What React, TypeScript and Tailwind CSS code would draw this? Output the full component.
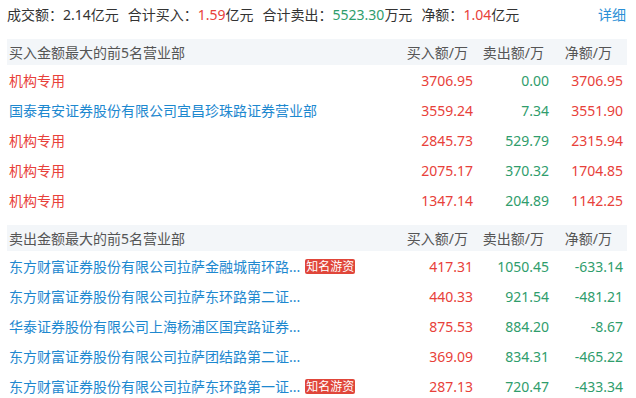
import React from "react";

const RED = "text-[#e8413a]";
const GREEN = "text-[#2f9d6c]";
const BLUE = "text-[#1d88cf]";

type Row = { name: string; inst?: boolean; badge?: boolean; buy: string; sell: string; net: string };

const buyRows: Row[] = [
  { name: "机构专用", inst: true, buy: "3706.95", sell: "0.00", net: "3706.95" },
  { name: "国泰君安证券股份有限公司宜昌珍珠路证券营业部", buy: "3559.24", sell: "7.34", net: "3551.90" },
  { name: "机构专用", inst: true, buy: "2845.73", sell: "529.79", net: "2315.94" },
  { name: "机构专用", inst: true, buy: "2075.17", sell: "370.32", net: "1704.85" },
  { name: "机构专用", inst: true, buy: "1347.14", sell: "204.89", net: "1142.25" },
];

const sellRows: Row[] = [
  { name: "东方财富证券股份有限公司拉萨金融城南环路...", badge: true, buy: "417.31", sell: "1050.45", net: "-633.14" },
  { name: "东方财富证券股份有限公司拉萨东环路第二证...", buy: "440.33", sell: "921.54", net: "-481.21" },
  { name: "华泰证券股份有限公司上海杨浦区国宾路证券...", buy: "875.53", sell: "884.20", net: "-8.67" },
  { name: "东方财富证券股份有限公司拉萨团结路第二证...", buy: "369.09", sell: "834.31", net: "-465.22" },
  { name: "东方财富证券股份有限公司拉萨东环路第一证...", badge: true, buy: "287.13", sell: "720.47", net: "-433.34" },
];

function Section({ title, rows }: { title: string; rows: Row[] }) {
  return (
    <div className="flex flex-col">
      <div className="flex h-[26px] items-center bg-[#f3f6f9] text-[#555] pr-[4px]">
        <div className="flex-1 pl-[2px]">{title}</div>
        <div className="w-[80px] text-right pr-[5px]">买入额/万</div>
        <div className="w-[76px] text-right pr-[5px]">卖出额/万</div>
        <div className="w-[74px] text-right pr-[11px]">净额/万</div>
      </div>
      {rows.map((r, i) => {
        const netNeg = r.net.startsWith("-");
        return (
          <div key={i} className="flex h-[30px] items-center pr-[4px]">
            <div className="flex-1 flex items-center pl-[2px] whitespace-nowrap overflow-hidden">
              <span className={r.inst ? RED : BLUE}>{r.name}</span>
              {r.badge && (
                <span className="ml-[5px] flex h-[15px] items-center rounded-[2px] bg-[#e0463a] px-[1px] text-[12px] leading-[15px] text-white">
                  知名游资
                </span>
              )}
            </div>
            <div className={`w-[80px] text-right ${RED}`}>{r.buy}</div>
            <div className={`w-[76px] text-right ${GREEN}`}>{r.sell}</div>
            <div className={`w-[74px] text-right ${netNeg ? GREEN : RED}`}>{r.net}</div>
          </div>
        );
      })}
    </div>
  );
}

export default function App() {
  return (
    <div
      className="w-[636px] h-[398px] overflow-hidden bg-white text-[14px] text-[#333]"
      style={{ fontFamily: '"Noto Sans", "Noto Sans CJK SC", sans-serif' }}
    >
      <div className="flex h-[28px] items-center pl-[7px] pr-[10px]">
        <div className="flex items-center gap-[9px] whitespace-nowrap">
          <span>
            成交额：<span>2.14</span>亿元
          </span>
          <span>
            合计买入：<span className={RED}>1.59</span>亿元
          </span>
          <span>
            合计卖出：<span className={GREEN}>5523.30</span>万元
          </span>
          <span>
            净额：<span className={RED}>1.04</span>亿元
          </span>
        </div>
        <div className="flex-1" />
        <span className="text-[#2a8fd6]">详细</span>
      </div>
      <div className="mt-[11px] ml-[7px] w-[620px] flex flex-col">
        <Section title="买入金额最大的前5名营业部" rows={buyRows} />
        <div className="mt-[10px]">
          <Section title="卖出金额最大的前5名营业部" rows={sellRows} />
        </div>
      </div>
    </div>
  );
}
